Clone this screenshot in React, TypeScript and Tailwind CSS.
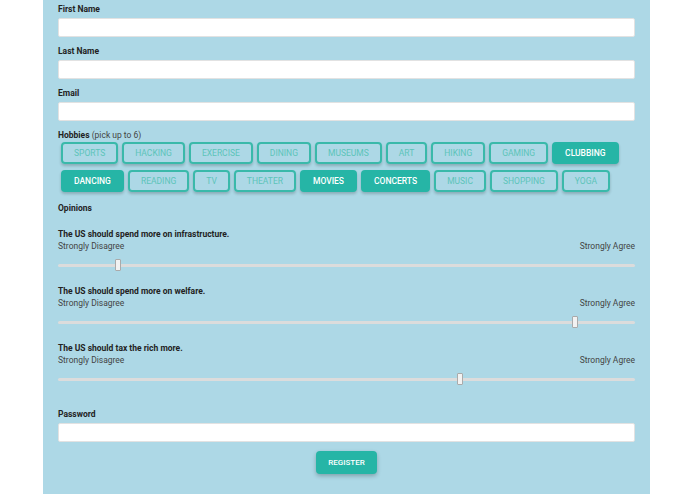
const chips: [string, boolean][][] = [
  [["Sports", false], ["Hacking", false], ["Exercise", false], ["Dining", false], ["Museums", false], ["Art", false], ["Hiking", false], ["Gaming", false], ["Clubbing", true]],
  [["Dancing", true], ["Reading", false], ["TV", false], ["Theater", false], ["Movies", true], ["Concerts", true], ["Music", false], ["Shopping", false], ["Yoga", false]],
];

const opinions = [
  { q: "The US should spend more on infrastructure.", v: 10.4 },
  { q: "The US should spend more on welfare.", v: 89.6 },
  { q: "The US should tax the rich more.", v: 69.7 },
];

function Field({ label, className = "" }: { label: string; className?: string }) {
  return (
    <div className={className}>
      <div className="text-[8.5px] font-bold text-[#222] leading-[10px]">{label}</div>
      <div className="mt-[4px] h-[19px] bg-white rounded-[2px] border border-[#e2e2e2]" />
    </div>
  );
}

export default function App() {
  return (
    <div className="w-[695px] h-[494px] bg-white overflow-hidden" style={{ fontFamily: "Roboto, 'Liberation Sans', sans-serif" }}>
      <div className="ml-[43px] w-[607px] h-[494px] bg-[#add8e6] px-[15px] pt-[4px]">
        <Field label="First Name" />
        <Field label="Last Name" className="mt-[9px]" />
        <Field label="Email" className="mt-[9px]" />
        <div className="mt-[9px] text-[8.5px] leading-[10px] text-[#222]">
          <span className="font-bold">Hobbies</span> <span className="text-[#444]">(pick up to 6)</span>
        </div>
        <div className="mt-[2px] ml-[3px] flex flex-col gap-[6px]">
          {chips.map((row, i) => (
            <div key={i} className="flex gap-[4px]">
              {row.map(([name, on]) => (
                <div
                  key={name}
                  className={`h-[22px] px-[11px] flex items-center rounded-[4px] border-2 text-[8.5px] uppercase shadow-[0_2px_3px_rgba(0,0,0,0.2)] ${
                    on ? "bg-[#26b5a6] border-[#26b5a6] text-white font-medium" : "border-[#3ab9aa] text-[#5cc4b9]"
                  }`}
                >
                  {name}
                </div>
              ))}
            </div>
          ))}
        </div>
        <div className="mt-[11px] text-[8.5px] font-bold text-[#222] leading-[10px]">Opinions</div>
        <div className="mt-[16px] flex flex-col gap-[15px]">
          {opinions.map((o) => (
            <div key={o.q}>
              <div className="text-[8.5px] font-bold text-[#222] leading-[10px]">{o.q}</div>
              <div className="mt-[2px] flex justify-between text-[8.5px] text-[#444] leading-[10px]">
                <span>Strongly Disagree</span>
                <span>Strongly Agree</span>
              </div>
              <div className="relative mt-[8px] h-[12px] flex items-center">
                <div className="w-full h-[3px] bg-[#dcdcdc] rounded-full" />
                <div
                  className="absolute top-0 w-[6px] h-[12px] -ml-[3px] bg-[#f2f2f2] border border-[#aaa] rounded-[1px]"
                  style={{ left: `${o.v}%` }}
                />
              </div>
            </div>
          ))}
        </div>
        <Field label="Password" className="mt-[24px]" />
        <div className="mt-[9px] flex justify-center">
          <div className="h-[23px] px-[12px] flex items-center rounded-[4px] bg-[#26b5a6] text-white text-[8px] uppercase font-medium shadow-[0_2px_4px_rgba(0,0,0,0.25)]">
            Register
          </div>
        </div>
      </div>
    </div>
  );
}
